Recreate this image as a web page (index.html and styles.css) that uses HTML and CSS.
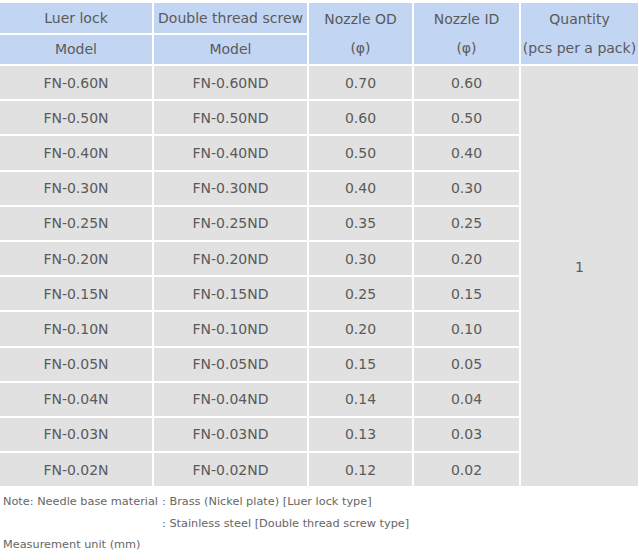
FILE: index.html
```html
<!DOCTYPE html>
<html>
<head>
<meta charset="utf-8">
<link rel="stylesheet" href="styles.css">
</head>
<body>
<table class="spec">
  <colgroup>
    <col class="c1"><col class="c2"><col class="c3"><col class="c4"><col class="c5">
  </colgroup>
  <thead>
    <tr class="h1">
      <th>Luer lock</th>
      <th>Double thread screw</th>
      <th rowspan="2">Nozzle OD<br>(φ)</th>
      <th rowspan="2">Nozzle ID<br>(φ)</th>
      <th rowspan="2">Quantity<br>(pcs per a pack)</th>
    </tr>
    <tr class="h2">
      <th>Model</th>
      <th>Model</th>
    </tr>
  </thead>
  <tbody>
    <tr><td>FN-0.60N</td><td>FN-0.60ND</td><td>0.70</td><td>0.60</td><td rowspan="12" class="qty">1</td></tr>
    <tr><td>FN-0.50N</td><td>FN-0.50ND</td><td>0.60</td><td>0.50</td></tr>
    <tr><td>FN-0.40N</td><td>FN-0.40ND</td><td>0.50</td><td>0.40</td></tr>
    <tr><td>FN-0.30N</td><td>FN-0.30ND</td><td>0.40</td><td>0.30</td></tr>
    <tr><td>FN-0.25N</td><td>FN-0.25ND</td><td>0.35</td><td>0.25</td></tr>
    <tr><td>FN-0.20N</td><td>FN-0.20ND</td><td>0.30</td><td>0.20</td></tr>
    <tr><td>FN-0.15N</td><td>FN-0.15ND</td><td>0.25</td><td>0.15</td></tr>
    <tr><td>FN-0.10N</td><td>FN-0.10ND</td><td>0.20</td><td>0.10</td></tr>
    <tr><td>FN-0.05N</td><td>FN-0.05ND</td><td>0.15</td><td>0.05</td></tr>
    <tr><td>FN-0.04N</td><td>FN-0.04ND</td><td>0.14</td><td>0.04</td></tr>
    <tr><td>FN-0.03N</td><td>FN-0.03ND</td><td>0.13</td><td>0.03</td></tr>
    <tr><td>FN-0.02N</td><td>FN-0.02ND</td><td>0.12</td><td>0.02</td></tr>
  </tbody>
</table>
<div class="notes">
  <div class="note-grid">
    <span>Note: Needle base material</span><span>: Brass (Nickel plate) [Luer lock type]</span>
    <span></span><span>: Stainless steel [Double thread screw type]</span>
  </div>
  <div class="unit">Measurement unit (mm)</div>
</div>
</body>
</html>
```
FILE: styles.css
```css
html, body {
  margin: 0;
  padding: 0;
  background: #fff;
}
body {
  font-family: "DejaVu Sans", Verdana, sans-serif;
  color: #5a5a5a;
}
.spec {
  border-collapse: collapse;
  table-layout: fixed;
  width: 640px;
  margin: 1px 0 0 -2px;
  font-size: 14px;
}
.c1 { width: 154px; }
.c2 { width: 155px; }
.c3 { width: 105px; }
.c4 { width: 107px; }
.c5 { width: 119px; }
.spec th, .spec td {
  border: 2px solid #fff;
  padding: 0;
  text-align: center;
  vertical-align: middle;
  font-weight: normal;
  white-space: nowrap;
}
.spec th {
  background: #c2d5f2;
  line-height: 29px;
  height: 28px;
}
.spec .h1 th {
  padding-top: 1px;
}
.spec td {
  background: #e1e1e1;
  height: 33.2px;
  line-height: 20px;
}
.spec td.qty {
  padding-bottom: 18px;
}
.notes {
  font-size: 11.3px;
  color: #666;
  padding: 3px 0 0 3px;
  line-height: 21.5px;
}
.note-grid {
  display: grid;
  grid-template-columns: max-content max-content;
  column-gap: 4px;
}
```
